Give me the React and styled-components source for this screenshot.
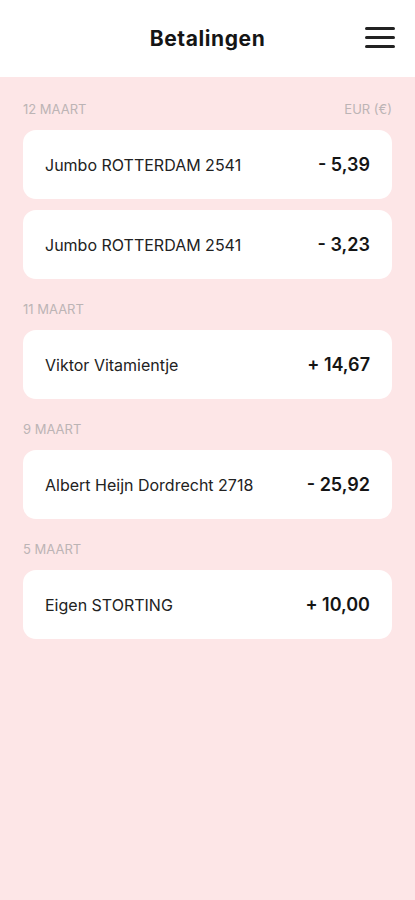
import React from 'react'
import styled, { createGlobalStyle } from 'styled-components'

const GlobalStyle = createGlobalStyle`
  html, body {
    margin: 0;
    padding: 0;
    background: #fde6e7;
    font-family: Inter, "Noto Sans", sans-serif;
    color: #1c1c1c;
  }
`

const Page = styled.div`
  min-height: 900px;
  background: #fde6e7;
`

const Header = styled.header`
  height: 77px;
  background: #ffffff;
  display: flex;
  align-items: center;
  justify-content: center;
  position: relative;
`

const Title = styled.h1`
  margin: 0;
  font-size: 21px;
  font-weight: 700;
  letter-spacing: 0.6px;
  color: #151515;
`

const MenuButton = styled.button`
  position: absolute;
  right: 20px;
  top: 27px;
  width: 30px;
  height: 21px;
  padding: 0;
  border: 0;
  background: none;
  display: flex;
  flex-direction: column;
  justify-content: space-between;
`

const MenuLine = styled.span`
  display: block;
  height: 3px;
  border-radius: 2px;
  background: #222;
`

const List = styled.main`
  padding: 24px 23px 0;
  display: flex;
  flex-direction: column;
  gap: 22px;
`

const Section = styled.section`
  display: flex;
  flex-direction: column;
`

const SectionHead = styled.div`
  display: flex;
  justify-content: space-between;
  font-size: 13px;
  line-height: 16px;
  color: #bcb4b5;
  text-transform: uppercase;
  margin-bottom: 13px;
`

const Cards = styled.div`
  display: flex;
  flex-direction: column;
  gap: 11px;
`

const Card = styled.div`
  height: 69px;
  background: #ffffff;
  border-radius: 13px;
  display: flex;
  align-items: center;
  justify-content: space-between;
  padding: 0 22px;
`

const Name = styled.span`
  font-size: 16px;
  color: #222;
`

const Amount = styled.span`
  font-size: 18px;
  font-weight: 600;
  color: #151515;
`

const days = [
  {
    date: '12 maart',
    currency: 'EUR (€)',
    items: [
      { name: 'Jumbo ROTTERDAM 2541', amount: '- 5,39' },
      { name: 'Jumbo ROTTERDAM 2541', amount: '- 3,23' },
    ],
  },
  { date: '11 maart', items: [{ name: 'Viktor Vitamientje', amount: '+ 14,67' }] },
  { date: '9 maart', items: [{ name: 'Albert Heijn Dordrecht 2718', amount: '- 25,92' }] },
  { date: '5 maart', items: [{ name: 'Eigen STORTING', amount: '+ 10,00' }] },
]

export default function App() {
  return (
    <Page>
      <GlobalStyle />
      <Header>
        <Title>Betalingen</Title>
        <MenuButton aria-label="menu">
          <MenuLine />
          <MenuLine />
          <MenuLine />
        </MenuButton>
      </Header>
      <List>
        {days.map((day) => (
          <Section key={day.date}>
            <SectionHead>
              <span>{day.date}</span>
              {day.currency && <span>{day.currency}</span>}
            </SectionHead>
            <Cards>
              {day.items.map((item, i) => (
                <Card key={i}>
                  <Name>{item.name}</Name>
                  <Amount>{item.amount}</Amount>
                </Card>
              ))}
            </Cards>
          </Section>
        ))}
      </List>
    </Page>
  )
}
